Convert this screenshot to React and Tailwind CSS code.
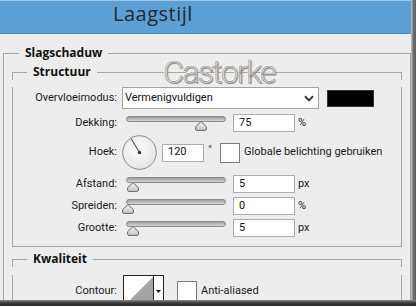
import React from "react";

const font = { fontFamily: "Roboto, 'Liberation Sans', sans-serif" };

function Group({ title, className = "", bodyClass = "", children, lead = "w-[16px]" }) {
  return (
    <div className={className}>
      <div className="flex h-[16px]">
        <div className={`self-end h-[8px] ${lead} border-l border-t border-[#a6a6a6]`} />
        <span
          className="px-[6px] text-[12px] leading-[16px] font-bold text-[#111]"
          style={{ fontFamily: "'Open Sans', 'Liberation Sans', sans-serif" }}
        >
          {title}
        </span>
        <div className="self-end h-[8px] flex-1 border-r border-t border-[#a6a6a6]" />
      </div>
      <div className={`border-x border-[#a6a6a6] ${bodyClass}`}>{children}</div>
    </div>
  );
}

function Label({ children }) {
  return <span className="w-[104px] shrink-0 text-right text-[11px] text-[#1a1a1a]">{children}</span>;
}

function Thumb({ left }) {
  return (
    <svg
      className="absolute top-[5px]"
      style={{ left }}
      width="12"
      height="10"
      viewBox="0 0 12 10"
    >
      <defs>
        <linearGradient id="tg" x1="0" y1="0" x2="0" y2="1">
          <stop offset="0" stopColor="#f2f2f2" />
          <stop offset="1" stopColor="#c4c4c4" />
        </linearGradient>
      </defs>
      <path
        d="M6 0.6 L11.4 5.6 V8 Q11.4 9.4 10 9.4 H2 Q0.6 9.4 0.6 8 V5.6 Z"
        fill="url(#tg)"
        stroke="#6a6a6a"
        strokeWidth="1"
      />
    </svg>
  );
}

function Slider({ left }) {
  return (
    <div className="relative w-[107px] h-[18px] shrink-0">
      <div className="ml-[4px] mt-[3px] w-[100px] h-[6px] rounded-full border border-[#8a8a8a] bg-gradient-to-b from-[#9c9c9c] to-[#d6d6d6]" />
      <Thumb left={left} />
    </div>
  );
}

function Input({ value, w = "w-[62px]", className = "" }) {
  return (
    <div
      className={`${w} h-[18px] shrink-0 border border-[#abadb3] bg-white pl-[5px] flex items-center text-[11px] text-[#111] ${className}`}
    >
      {value}
    </div>
  );
}

function SliderRow({ label, left, value, unit, className }) {
  return (
    <div className={`flex items-center h-[18px] ${className}`}>
      <Label>{label}</Label>
      <div className="ml-[5px]">
        <Slider left={left} />
      </div>
      <Input value={value} className="ml-[4px]" />
      <span className="ml-[3px] text-[11px] text-[#1a1a1a]">{unit}</span>
    </div>
  );
}

function Checkbox({ className = "" }) {
  return <div className={`w-[20px] h-[20px] shrink-0 border border-[#7a7a7a] bg-white ${className}`} />;
}

export default function App() {
  return (
    <div className="relative w-[416px] h-[306px] overflow-hidden flex flex-col bg-[#ededed]" style={font}>
      <div className="flex flex-1 min-h-0">
        <div className="w-[411px] flex flex-col">
          <div className="h-[34px] shrink-0 bg-[#5c9fd4] border-t border-[#9cc5e8] border-b border-b-[#4b87bd] pl-[113px] pt-[3px]">
            <span
              className="block text-[20px] leading-none tracking-[0.5px] text-[#1e2935]"
              style={{ fontFamily: "'Open Sans', 'Noto Sans', sans-serif" }}
            >
              Laagstijl
            </span>
          </div>
          <div className="flex-1 min-h-0 overflow-hidden pt-[11px] pl-[3px]">
            <Group title="Slagschaduw" className="w-[408px]" bodyClass="px-[8px] pt-[3px] h-[400px]">
              <Group title="Structuur" lead="w-[15px]" bodyClass="border-b pb-[9px]">
                <div className="flex items-center h-[22px] mt-[7px]">
                  <Label>Overvloeimodus:</Label>
                  <div className="ml-[5px] w-[197px] h-[22px] border border-[#a3a3a3] bg-white flex items-center justify-between pl-[2px] pr-[4px] text-[11px] text-[#111]">
                    <span>Vermenigvuldigen</span>
                    <svg width="10" height="7" viewBox="0 0 10 7">
                      <polyline points="1,1.2 5,5.4 9,1.2" fill="none" stroke="#3a3a3a" strokeWidth="2" />
                    </svg>
                  </div>
                  <div className="ml-[8px] w-[47px] h-[17px] bg-black border border-[#333]" />
                </div>

                <SliderRow label="Dekking:" left="73px" value="75" unit="%" className="mt-[5px]" />

                <div className="flex items-center h-[35px] mt-[3px]">
                  <Label>Hoek:</Label>
                  <svg className="ml-[5px] shrink-0" width="35" height="35" viewBox="0 0 35 35">
                    <defs>
                      <radialGradient id="dg" cx="0.45" cy="0.4" r="0.65">
                        <stop offset="0" stopColor="#ffffff" />
                        <stop offset="1" stopColor="#e2e2e2" />
                      </radialGradient>
                    </defs>
                    <circle cx="17.5" cy="17.5" r="16.8" fill="url(#dg)" stroke="#8a8a8a" strokeWidth="1" />
                    <line x1="17.5" y1="17.5" x2="9.2" y2="3.8" stroke="#555" strokeWidth="1.2" />
                    <circle cx="17.5" cy="17.5" r="1.7" fill="#333" />
                  </svg>
                  <Input value="120" w="w-[42px]" className="ml-[5px]" />
                  <span className="ml-[4px] self-start mt-[9px] text-[11px] leading-none text-[#333]">°</span>
                  <Checkbox className="ml-[8px]" />
                  <span className="ml-[4px] text-[11px] text-[#1a1a1a]">Globale belichting gebruiken</span>
                </div>

                <SliderRow label="Afstand:" left="5px" value="5" unit="px" className="mt-[5px]" />
                <SliderRow label="Spreiden:" left="0px" value="0" unit="%" className="mt-[4px]" />
                <SliderRow label="Grootte:" left="5px" value="5" unit="px" className="mt-[4px]" />
              </Group>

              <Group title="Kwaliteit" lead="w-[15px]" className="mt-[4px]" bodyClass="border-b h-[60px]">
                <div className="flex items-center h-[32px] mt-[8px]">
                  <Label>Contour:</Label>
                  <div className="ml-[6px] w-[41px] h-[32px] shrink-0 border border-[#222] bg-white flex">
                    <svg className="flex-1" width="29" height="30" viewBox="0 0 29 30" preserveAspectRatio="none">
                      <polygon points="0,30 29,1 29,30" fill="#a4a4a4" />
                    </svg>
                    <div className="w-[10px] border-l border-[#222] flex items-center justify-center">
                      <svg width="5" height="3" viewBox="0 0 5 3">
                        <polygon points="0,0 5,0 2.5,3" fill="#111" />
                      </svg>
                    </div>
                  </div>
                  <Checkbox className="ml-[13px]" />
                  <span className="ml-[4px] text-[11px] text-[#1a1a1a]">Anti-aliased</span>
                </div>
              </Group>
            </Group>
          </div>
        </div>
        <div className="w-[5px] shrink-0 bg-gradient-to-r from-[#c4c4c4] via-[#6f6f6f] to-[#5c5c5c]" />
      </div>
      <div className="h-[6px] shrink-0 bg-gradient-to-b from-[#8a8a8a] via-[#3a3a3a] to-[#262626]" />

      <span
        className="absolute left-[163px] top-[56px] text-[32px] font-light leading-none tracking-[-1.6px] text-[#e4e4e4] pointer-events-none"
        style={{
          fontFamily: "Roboto, 'Liberation Sans', sans-serif",
          WebkitTextStroke: "0.6px #8c8c8c",
          textShadow: "1px 1px 1px #8a8a8a, -1px -1px 0 #ffffff",
        }}
      >
        Castorke
      </span>
    </div>
  );
}
